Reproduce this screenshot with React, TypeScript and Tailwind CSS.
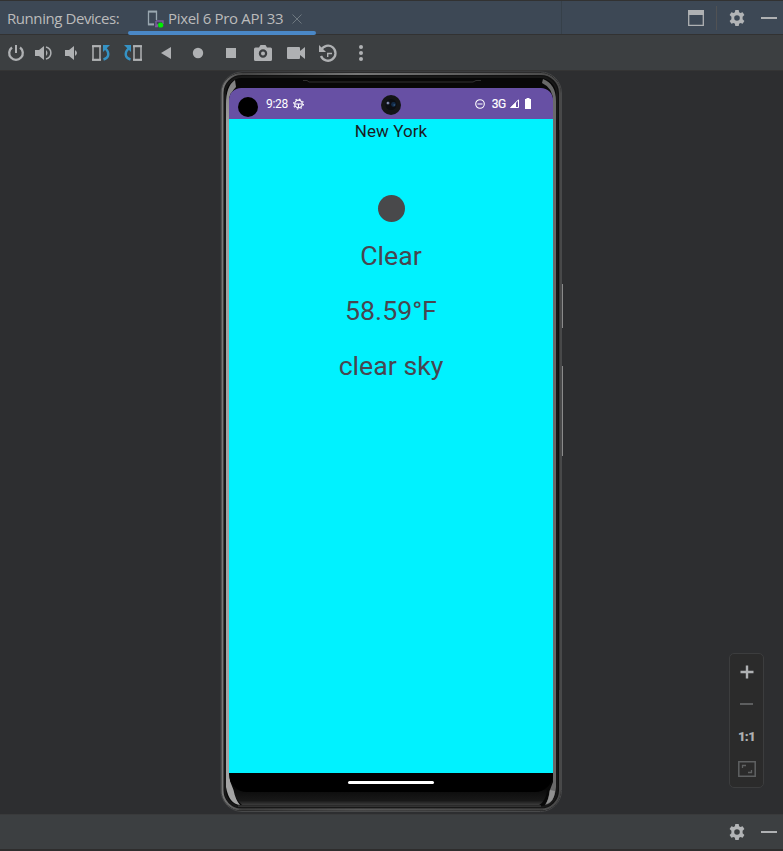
import React from "react";

function Gear() {
  return (
    <svg width="16" height="16" viewBox="0 0 16 16" fill="#b2b4b6" fillRule="evenodd">
      <path d="M6.3 0h3.4l.4 2.300 1.300.7 2.200-.8 1.800 2.900-1.800 1.600v2.600l1.800 1.600-1.800 2.900-2.200-.8-1.300.7-.4 2.300H6.300l-.4-2.300-1.300-.7-2.200.8L.6 10.900l1.800-1.600V6.700L.6 5.100l1.800-2.900 2.200.8 1.300-.7zM8 5.200a2.800 2.800 0 1 0 0 5.600 2.800 2.800 0 0 0 0-5.600z" />
    </svg>
  );
}

function Tool({ cell, children }: { cell: string; children: React.ReactNode }) {
  return (
    <div className={`flex h-full shrink-0 items-center justify-center ${cell}`}>
      <svg width="18" height="18" viewBox="0 0 18 18" fill="#afb1b3">
        {children}
      </svg>
    </div>
  );
}

function TitleBar() {
  return (
    <div className="flex h-[35px] shrink-0 border-b border-t border-[#323232] bg-[#3d4855] text-[15px] text-[#bbbbbb]">
      <div className="flex w-[128px] shrink-0 items-center whitespace-nowrap pl-[7px] pt-[2px]">
        <span className="tracking-[-0.430px]">Running Devices:</span>
      </div>
      <div className="relative flex w-[188px] shrink-0 items-center pl-[19px] pt-[2px]">
        <svg width="17" height="18" viewBox="0 0 17 18" fill="none">
          <path d="M7 14.500H1.500V1.500h8V10" stroke="#9aa7b0" strokeWidth="1.300" />
          <path d="M1 14.300h6M1 1.700h9" stroke="#9aa7b0" strokeWidth="1.800" />
          <path d="M9 11h7v3M9 11v4h2M8 16.500h3" stroke="#7d5b9d" strokeWidth="1.400" />
          <circle cx="13.700" cy="15" r="2.600" fill="#00ee00" />
        </svg>
        <span className="ml-[4px] whitespace-nowrap tracking-[-0.330px]">Pixel 6 Pro API 33</span>
        <svg className="absolute left-[164px] top-[13px]" width="10" height="10" viewBox="0 0 10 10" stroke="#6e7880">
          <path d="M.5.5l9 9M9.500.5l-9 9" />
        </svg>
        <div className="absolute bottom-[-1px] left-0 h-[4px] w-full rounded-full bg-[#4a88c7]" />
      </div>
      <div className="w-[246px] shrink-0 border-r border-[#364049]" />
      <div className="flex flex-1 items-center justify-end pr-[6px]">
        <svg width="16" height="16" viewBox="0 0 16 16">
          <path d="M.7.7h14.600v14.600H.7z" fill="none" stroke="#afb1b3" strokeWidth="1.300" />
          <path d="M0 0h16v5H0z" fill="#afb1b3" />
        </svg>
        <div className="ml-[12px] mr-[12px] h-[24px] w-px bg-[#515254]" />
        <Gear />
        <div className="ml-[16px] h-[2px] w-[16px] bg-[#afb1b3]" />
      </div>
    </div>
  );
}

function Toolbar() {
  return (
    <div className="flex h-[36px] shrink-0 border-b border-[#343434] bg-[#3c3f41] pl-px pt-px">
      <Tool cell="w-[30px]">
        <path d="M5 3.500a6.800 6.800 0 1 0 8 0" fill="none" stroke="#afb1b3" strokeWidth="2.300" />
        <path d="M8 1h2v8H8z" />
      </Tool>
      <Tool cell="w-[26px]">
        <path d="M0 6h4l5-4v14l-5-4H0z" />
        <path d="M11 6q3 3 0 6z" />
        <path d="M11 3c6.500 1.800 6.500 10.200 0 12" fill="none" stroke="#afb1b3" strokeWidth="1.500" />
      </Tool>
      <Tool cell="w-[27px]">
        <path d="M3 6h4l5-4v14l-5-4H3zM13 6q4 3 0 6z" />
      </Tool>
      <Tool cell="w-[34px]">
        <path d="M1 2h7v14H1z" fill="none" stroke="#afb1b3" strokeWidth="1.500" />
        <path d="M0 1.200h9v2H0zM0 14.800h9v2H0z" />
        <path d="M11.500 15.500c6-2 6-7 2-11" fill="none" stroke="#3592c4" strokeWidth="2.400" />
        <path d="M11 1h7l-7 7z" fill="#3592c4" />
      </Tool>
      <Tool cell="w-[30px]">
        <path d="M10 2h7v14h-7z" fill="none" stroke="#afb1b3" strokeWidth="1.500" />
        <path d="M9 1.200h9v2H9zM9 14.800h9v2H9z" />
        <path d="M6.500 15.500c-6-2-6-7-2-11" fill="none" stroke="#3592c4" strokeWidth="2.400" />
        <path d="M7 1H0l7 7z" fill="#3592c4" />
      </Tool>
      <Tool cell="w-[36px]">
        <path d="M4 9l10-6v12z" />
      </Tool>
      <Tool cell="w-[28px]">
        <circle cx="9" cy="9" r="5.200" />
      </Tool>
      <Tool cell="w-[38px]">
        <path d="M4 4h10v10H4z" />
      </Tool>
      <Tool cell="w-[26px]">
        <path fillRule="evenodd" d="M1.500 3.500H5L6.500 1h5L13 3.500h3.500q1.500 0 1.500 1.500v10.500q0 1.500-1.500 1.500h-15Q0 17 0 15.500V5q0-1.500 1.500-1.500zM9 5.300a4.200 4.200 0 1 0 0 8.400 4.200 4.200 0 0 0 0-8.400zm0 2.200a2 2 0 1 1 0 4 2 2 0 0 1 0-4z" />
      </Tool>
      <Tool cell="w-[40px]">
        <path d="M1 3h11q1 0 1 1v3l5-4v12l-5-4v3q0 1-1 1H1q-1 0-1-1V4q0-1 1-1z" />
      </Tool>
      <Tool cell="w-[24px]">
        <path d="M2.200 6A7.500 7.500 0 1 1 2 12" fill="none" stroke="#afb1b3" strokeWidth="2.300" />
        <path d="M0 1v7h7z" />
        <path d="M8.700 13V9.500H13" fill="none" stroke="#afb1b3" strokeWidth="1.400" />
      </Tool>
      <Tool cell="w-[42px]">
        <circle cx="9" cy="3" r="2" />
        <circle cx="9" cy="9" r="2" />
        <circle cx="9" cy="15" r="2" />
      </Tool>
    </div>
  );
}

function PhoneFrame() {
  return (
    <svg className="absolute inset-0" width="344" height="742" viewBox="220 71 344 742" fill="none">
      <defs>
        <linearGradient id="chin" x1="0" y1="0" x2="0" y2="1">
          <stop offset="0" stopColor="#0c0c0c" />
          <stop offset="0.700" stopColor="#181818" />
          <stop offset="1" stopColor="#3c3c3c" />
        </linearGradient>
        <linearGradient id="rim" x1="0" y1="0" x2="1" y2="0">
          <stop offset="0" stopColor="#777" />
          <stop offset="0.060" stopColor="#444" />
          <stop offset="0.400" stopColor="#777" />
          <stop offset="0.850" stopColor="#555" />
          <stop offset="1" stopColor="#484848" />
        </linearGradient>
        <linearGradient id="silver" x1="0" y1="0" x2="0" y2="1">
          <stop offset="0" stopColor="#808080" />
          <stop offset="0.060" stopColor="#a0a0a0" />
          <stop offset="1" stopColor="#a4a4a4" />
        </linearGradient>
      </defs>
      <path d="M561.500 284h1.500v44h-1.500zM561.500 366h1.500v90h-1.500z" fill="#8a8a8a" />
      <rect x="221" y="72" width="340.500" height="739.500" rx="21" fill="#111" stroke="#48494a" />
      <rect x="222.500" y="74" width="337.500" height="735.500" rx="19" stroke="url(#rim)" strokeWidth="2" />
      <rect x="225" y="77" width="332" height="730" rx="17" fill="#080808" stroke="#181818" strokeWidth="2" />
      <path d="M233 790h314q-1 11-8 15H242q-6-5-9-15z" fill="url(#chin)" />
      <path d="M226 787V104Q226 86 235 80l1 7q-6 5-6 17v677l3.500 9q2 10 6.500 15-11-1-14-18z" fill="url(#silver)" />
      <path d="M556 787V101Q556 84 543 79l-1 4q11 5 11 18v681l-3.500 9q-1 9-4.500 14 10-2 11-18z" fill="#696969" />
      <path d="M550 790q-1 9-4 14 8-2 9-13z" fill="#909090" />
      <path d="M238 806h303" stroke="#4d4d4d" />
      <path d="M239 809h304" stroke="#383838" />
      <path d="M303 80.500h4l2 1.500h164l3-1.500h5" stroke="#303030" />
      <path d="M220.500 130v560M559.500 130v560" stroke="#353637" />
    </svg>
  );
}

function StatusBar() {
  return (
    <div className="relative flex h-[31px] shrink-0 items-center bg-[#6750a4] text-[12px] text-white">
      <div className="ml-[9px] mt-[6px] h-[20px] w-[20px] rounded-full bg-black" />
      <span className="ml-[8px] tracking-[-0.300px]">9:28</span>
      <svg className="ml-[5px]" width="11" height="12" viewBox="0 0 12 12" fill="none" stroke="white">
        <circle cx="6" cy="6" r="4.200" strokeWidth="1.200" />
        <path d="M2 6h8M6 6v4" strokeWidth="1.200" />
        <circle cx="6" cy="6" r="5.400" strokeWidth="1.200" strokeDasharray="1.700 2.540" />
      </svg>
      <div className="flex flex-1 items-center justify-end pr-[22px]">
        <svg width="10" height="10" viewBox="0 0 10 10" fill="none" stroke="white">
          <circle cx="5" cy="5" r="4.300" strokeWidth="1.100" />
          <path d="M2.500 5h5" strokeWidth="1.100" />
        </svg>
        <span className="ml-[7px] text-[12px] tracking-[-0.300px] [-webkit-text-stroke:0.2px_white]">3G</span>
        <svg className="ml-[4px]" width="9" height="9" viewBox="0 0 9 9">
          <path d="M.8 8.500L8.500.8v7.700z" fill="none" stroke="white" />
          <path d="M6 3.200V9H0z" fill="white" />
        </svg>
        <svg className="ml-[6px]" width="6" height="11" viewBox="0 0 6 11" fill="white">
          <path d="M1.500 0h3v1H6v10H0V1h1.500z" />
        </svg>
      </div>
      <svg className="absolute left-[152px] top-[7px]" width="20" height="20" viewBox="0 0 20 20">
        <circle cx="10" cy="10" r="10" fill="#141517" />
        <circle cx="10" cy="9.500" r="5.500" fill="#0c0e13" />
        <circle cx="12.500" cy="9.500" r="2.400" fill="#132b48" />
        <circle cx="7" cy="8" r="1.600" fill="#535b80" />
        <circle cx="6.900" cy="8" r=".7" fill="#c8d3e5" />
        <circle cx="13.200" cy="10" r=".8" fill="#3d688f" />
      </svg>
    </div>
  );
}

function Phone() {
  return (
    <div className="relative h-[742px] w-[344px] pl-[9px] pt-[17px]">
      <PhoneFrame />
      <div className="relative flex h-[704px] w-[324px] flex-col overflow-hidden rounded-b-[18px] rounded-t-[12px] bg-black font-[Roboto,sans-serif]">
        <StatusBar />
        <div className="flex h-[654px] shrink-0 flex-col items-center bg-[#00f2ff] text-[#49454f]">
          <div className="mt-[2px] h-[20px] text-[17px] leading-[20px] tracking-[0.100px] text-[#1c1b1f]">New York</div>
          <div className="mt-[54px] h-[27px] w-[27px] rounded-full bg-[#49494b]" />
          <div className="mt-[18px] h-[32px] text-[26.700px] leading-[32px]">Clear</div>
          <div className="mt-[23px] h-[32px] text-[26.700px] leading-[32px]">58.59°F</div>
          <div className="mt-[23px] h-[32px] text-[26.700px] leading-[32px]">clear sky</div>
        </div>
        <div className="mx-auto mt-[8px] h-[3px] w-[86px] rounded-full bg-white" />
      </div>
    </div>
  );
}

function ZoomPanel() {
  return (
    <div className="absolute left-[729px] top-[582px] flex h-[135px] w-[35px] flex-col items-center rounded-[5px] border border-[#3c3d3e] bg-[#2b2b2b]">
      <svg className="mt-[11px]" width="14" height="14" viewBox="0 0 14 14" fill="#afb1b3">
        <path d="M5.800.5h2.400V5.800h5.300v2.400H8.200v5.300H5.800V8.200H.5V5.800h5.300z" />
      </svg>
      <div className="mt-[24px] h-[2px] w-[13px] bg-[#5d5e5f]" />
      <div className="mt-[24px] h-[16px] font-[Roboto,sans-serif] text-[13px] font-black leading-[16px] tracking-[-0.600px] text-[#afb1b3]">1:1</div>
      <svg className="mt-[16px]" width="18" height="16" viewBox="0 0 18 16" fill="none" stroke="#5f6162">
        <path d="M.8.8h16.400v14.400H.8z" strokeWidth="1.500" />
        <path d="M4.500 7V4.500H8M10 11.500h3.500V9" strokeWidth="1.300" />
      </svg>
    </div>
  );
}

export default function App() {
  return (
    <div className="flex h-[851px] w-[783px] flex-col overflow-hidden bg-[#2d2e30] font-['Open_Sans','Noto_Sans',sans-serif]">
      <TitleBar />
      <Toolbar />
      <main className="relative h-[743px] shrink-0 pl-[220px]">
        <Phone />
        <ZoomPanel />
      </main>
      <div className="flex h-[35px] shrink-0 items-center justify-end border-t border-[#393a3b] bg-[#3c3f41] pr-[6px]">
        <Gear />
        <div className="ml-[16px] h-[2px] w-[16px] bg-[#afb1b3]" />
      </div>
      <div className="h-[2px] shrink-0 bg-[#2e2d2d]" />
    </div>
  );
}
